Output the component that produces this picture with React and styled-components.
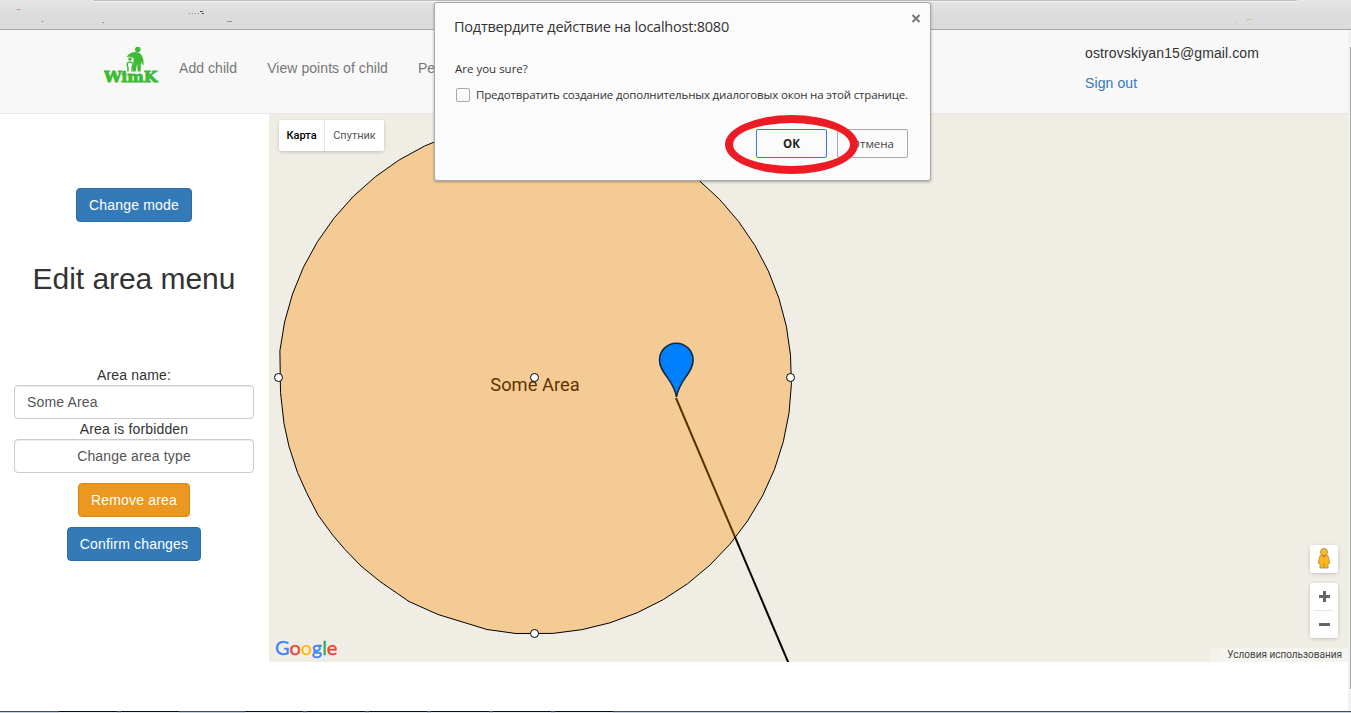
import React from "react";
import styled, { createGlobalStyle, css } from "styled-components";

const Global = createGlobalStyle`
  * { box-sizing: border-box; }
  html, body { margin: 0; padding: 0; }
  body {
    overflow: hidden;
    background: #fff;
    color: #333;
    font: 14px/20px "Liberation Sans", Arial, sans-serif;
  }
`;

const Screen = styled.div`
  position: relative;
  width: 1351px;
  height: 713px;
  display: flex;
  flex-direction: column;
  overflow: hidden;
`;

const BrowserBar = styled.div`
  flex: none;
  height: 30px;
  background: linear-gradient(#e6e6e6, #dcdcdc 50%);
  border-bottom: 1px solid #a5a5a5;
`;

const BarMarks = styled.svg`
  display: block;
`;

const Viewport = styled.div`
  flex: 1;
  min-height: 0;
  display: flex;
`;

const Page = styled.div`
  width: 1348px;
  display: flex;
  flex-direction: column;
`;

const Scrollbar = styled.div`
  flex: 1;
  background: #f1f1f1;
  padding: 17px 0 0 2px;
`;

const Thumb = styled.div`
  height: 642px;
  background: #a8a8a8;
`;

const Navbar = styled.header`
  flex: none;
  height: 84px;
  padding: 0 89px 0 104px;
  display: flex;
  background: #f8f8f8;
  border-bottom: 1px solid #e7e7e7;
`;

const Logo = styled.svg`
  margin-top: 15px;
  width: 56px;
  height: 40px;
`;

const NavLinks = styled.nav`
  flex: 1;
  display: flex;
  gap: 30px;
  padding: 28px 0 0 19px;
  letter-spacing: 0.06px;
`;

const NavLink = styled.a`
  color: #777;
  white-space: nowrap;
`;

const Account = styled.div`
  width: 174px;
  display: flex;
  flex-direction: column;
  gap: 10px;
  padding-top: 13px;
  letter-spacing: 0.11px;
`;

const SignOut = styled.a`
  color: #337ab7;
`;

const Main = styled.main`
  height: 548px;
  display: flex;
`;

const Sidebar = styled.aside`
  width: 269px;
  padding: 74px 15px 0 14px;
  display: flex;
  flex-direction: column;
  align-items: center;
  letter-spacing: 0.15px;
`;

const tones = {
  primary: css`
    background: #337ab7;
    border-color: #2e6da4;
  `,
  warning: css`
    background: #ec971f;
    border-color: #d58512;
  `,
};

const Button = styled.button`
  height: 34px;
  flex: none;
  padding: 0 12px;
  margin-top: ${(p) => p.$gap || 0}px;
  border: 1px solid;
  border-radius: 4px;
  color: #fff;
  font: inherit;
  letter-spacing: 0.17px;
  white-space: nowrap;
  ${(p) => tones[p.$tone]}
`;

const Title = styled.h2`
  margin: 40px 0 70px;
  font-size: 30px;
  line-height: 33px;
  font-weight: 400;
  letter-spacing: -0.05px;
  white-space: nowrap;
`;

const Field = styled.div`
  width: 240px;
  height: 34px;
  padding: 6px 12px;
  border: 1px solid #ccc;
  border-radius: 4px;
  color: #555;
  text-align: ${(p) => p.$align || "left"};
  box-shadow: inset 0 1px 1px rgba(0, 0, 0, 0.075);
`;

const MapPane = styled.section`
  position: relative;
  width: 1079px;
  height: 548px;
  background: #f0ede5;
  overflow: hidden;
  font-family: Roboto, Arial, sans-serif;
`;

const MapDrawing = styled.svg`
  display: block;
`;

const MapTypes = styled.div`
  position: absolute;
  left: 10px;
  top: 6px;
  display: flex;
  height: 31px;
  border-radius: 2px;
  background: #fff;
  box-shadow: 0 1px 4px -1px rgba(0, 0, 0, 0.3);
  font-size: 11px;
  line-height: 31px;
`;

const MapType = styled.div`
  width: ${(p) => p.$width}px;
  text-align: center;
  color: ${(p) => (p.$active ? "#000" : "#565656")};
  font-weight: ${(p) => (p.$active ? 500 : 400)};
  & + & { border-left: 1px solid #e6e6e6; }
`;

const Controls = styled.div`
  position: absolute;
  right: 10px;
  bottom: 24px;
  display: flex;
  flex-direction: column;
  gap: 10px;
`;

const ControlCard = styled.div`
  width: 28px;
  height: ${(p) => p.$height}px;
  background: #fff;
  border-radius: 2px;
  box-shadow: 0 1px 4px -1px rgba(0, 0, 0, 0.3);
`;

const Terms = styled.div`
  position: absolute;
  right: 0;
  bottom: 0;
  height: 14px;
  padding: 0 6px 0 5px;
  border-left: 12px solid #f3f2ec;
  background: #f5f4ef;
  color: #444;
  font-size: 10px;
  line-height: 14px;
  white-space: nowrap;
`;

const GoogleMark = styled.div`
  position: absolute;
  left: 6px;
  bottom: 3px;
  font: 20px/24px Lato, sans-serif;
  letter-spacing: -0.1px;
  -webkit-text-stroke: 0.5px;
  text-shadow: 0 0 2px #fff, 0 0 2px #fff, 0 0 2px #fff;
`;

const Letter = styled.span`
  color: ${(p) => p.$color};
  -webkit-text-stroke-color: ${(p) => p.$color};
`;

const TaskStrip = styled.div`
  height: 2px;
  flex: none;
  display: flex;
  background: #c5d3e0;
  border-top: 1px solid #3c4f66;
`;

const TaskGap = styled.div`
  width: 59px;
`;

const TaskItem = styled.div`
  width: 58px;
  height: 2px;
  margin: -1px ${(p) => p.$gap || 4}px 0 0;
  border-top: 1px solid #111;
  background: #e6edf3;
`;

const Dialog = styled.div`
  position: absolute;
  left: 434px;
  top: 2px;
  width: 497px;
  height: 179px;
  padding: 14px 22px 0 20px;
  border: 1px solid #a9a9a9;
  border-radius: 3px;
  background: #fbfbfb;
  box-shadow: 0 1px 3px rgba(0, 0, 0, 0.3);
  color: #333;
  font: 11.5px/16px "Open Sans", sans-serif;
`;

const DialogHead = styled.div`
  display: flex;
  justify-content: space-between;
  margin: 0 -13px 0 -1px;
  height: 44px;
`;

const DialogTitle = styled.div`
  font-size: 14.5px;
  line-height: 20px;
  letter-spacing: -0.23px;
  white-space: nowrap;
`;

const CloseIcon = styled.svg`
  margin-top: -6px;
`;

const CheckRow = styled.div`
  display: flex;
  align-items: center;
  gap: 6px;
  height: 16px;
  margin-top: 10px;
  padding-left: 1px;
  white-space: nowrap;
  letter-spacing: -0.165px;
`;

const Checkbox = styled.span`
  width: 14px;
  height: 14px;
  flex: none;
  border: 1px solid #aaa;
  border-radius: 2px;
  background: linear-gradient(#fff, #f5f5f5);
`;

const DialogActions = styled.div`
  display: flex;
  justify-content: flex-end;
  gap: 10px;
  margin-top: 26px;
`;

const DialogButton = styled.button`
  width: 71px;
  height: 29px;
  padding: 0;
  border: 1px solid ${(p) => (p.$primary ? "#3b78e7" : "#aaa")};
  border-radius: 2px;
  background: #fbfbfb;
  color: ${(p) => (p.$primary ? "#222" : "#444")};
  font: ${(p) => (p.$primary ? 700 : 400)} 11.5px "Open Sans", sans-serif;
`;

const Highlight = styled.div`
  position: absolute;
  left: 725px;
  top: 115px;
  width: 133px;
  height: 59px;
  border: 8px solid #ed1c24;
  border-radius: 50%;
`;

// South-west part of the area outline, as offsets from its centre.
const southWest = [
  [-254.5, 15], [-251, 46], [-246, 69], [-237.5, 95], [-228.5, 115],
  [-217, 137.5], [-202, 158], [-190, 172], [-174, 188.5], [-155, 204],
  [-126, 224], [-97, 237], [-48, 252], [-19, 256],
];
// The rest of the outline, evenly stepped from south through east to west.
const rest = Array.from({ length: 41 }, (_, i) => {
  const a = ((86 - i * 6.5) * Math.PI) / 180;
  return [256.5 * Math.cos(a), 256.5 * Math.sin(a)];
});
const circlePoints = [...southWest, ...rest]
  .map(([x, y]) => `${(266 + x).toFixed(1)},${(263.5 + y).toFixed(1)}`)
  .join(" ");

const handles = [
  [9.5, 263.5],
  [265.5, 263.5],
  [521.5, 263.5],
  [265.5, 519.5],
];

const googleLetters = [
  ["G", "#4285f4"],
  ["o", "#ea4335"],
  ["o", "#fbbc05"],
  ["g", "#4285f4"],
  ["l", "#34a853"],
  ["e", "#ea4335"],
];

export default function App() {
  return (
    <>
      <Global />
      <Screen>
        <BrowserBar>
          <BarMarks width="1351" height="29">
            <path d="M94 .5H1297" stroke="#bdbdbd" />
            <path d="M94 1.5H1297" stroke="#f4f4f4" />
            <path d="M17 9.5h3" stroke="#d08a80" />
            <path d="M42 21.5h1" stroke="#667" />
            <path d="M102 22.5h2M227 21.5h5" stroke="#7f97c0" />
            <path d="M189 13.5h11" stroke="#889" strokeDasharray="1 2" />
            <path d="M200 11.5h3M202 13.5h2" stroke="#555" />
            <path d="M1246 19.5h5" stroke="#e5bd7c" />
            <path d="M1236.500 20v5" stroke="#cfcfcf" />
          </BarMarks>
        </BrowserBar>
        <Viewport>
          <Page>
            <Navbar>
              <Logo viewBox="0 0 56 40">
                <g fill="#3dbb35">
                  <circle cx="33.800" cy="4.500" r="2.800" />
                  <path d="M22.500 12c3-5 9-6 13-4 3 2 4.500 7 4 12l-1.500-.5-1-3-.3 10h-3l-.5-8-1.500 8h-3l1-13c-2-2-4-2-7.200-1.500z" />
                  <circle cx="26" cy="14" r="1.800" />
                </g>
                <path d="M23 18.500q3-3 6 0l-1 5v3M23 18.500l1 5v3" fill="none" stroke="#3dbb35" strokeWidth="1.500" />
                <text x="0" y="36.500" textLength="53.500" lengthAdjust="spacingAndGlyphs" fill="#3dbb35" stroke="#3dbb35" strokeWidth=".9" fontFamily="DejaVu Serif" fontWeight="700" fontSize="14.500">WimK</text>
              </Logo>
              <NavLinks>
                <NavLink>Add child</NavLink>
                <NavLink>View points of child</NavLink>
                <NavLink>Pe</NavLink>
              </NavLinks>
              <Account>
                <span>ostrovskiyan15@gmail.com</span>
                <SignOut>Sign out</SignOut>
              </Account>
            </Navbar>
            <Main>
              <Sidebar>
                <Button $tone="primary">Change mode</Button>
                <Title>Edit area menu</Title>
                <span>Area name:</span>
                <Field>Some Area</Field>
                <span>Area is forbidden</span>
                <Field $align="center">Change area type</Field>
                <Button $tone="warning" $gap={10}>Remove area</Button>
                <Button $tone="primary" $gap={10}>Confirm changes</Button>
              </Sidebar>
              <MapPane>
                <MapDrawing width="1079" height="548">
                  <path d="M407 284L519.500 549" stroke="#000" strokeWidth="2" />
                  <text x="266" y="277" textAnchor="middle" fontSize="18.300" textLength="89.500" fontFamily="Roboto" fill="#000">Some Area</text>
                  <polygon points={circlePoints} fill="#ff8c00" fillOpacity=".35" stroke="#000" strokeWidth="1" />
                  <path d="M407.500 283C405 266 390.500 259 390.500 246a16.800 16.800 0 0 1 33.600 0c0 13-14 20-16.600 37z" fill="#0080ff" stroke="#132b42" strokeWidth="1.600" />
                  {handles.map(([x, y]) => (
                    <circle key={`${x}-${y}`} cx={x} cy={y} r="4" fill="#fff" stroke="#000" />
                  ))}
                </MapDrawing>
                <MapTypes>
                  <MapType $active $width={45}>Карта</MapType>
                  <MapType $width={60}>Спутник</MapType>
                </MapTypes>
                <Controls>
                  <ControlCard $height={28}>
                    <svg width="28" height="28">
                      <path d="M10 10.500q4-2 8 0l2 7.500-2 .8v4.200h-8v-4.200l-2-.8z" fill="#fbb820" stroke="#a58c5a" strokeWidth=".8" />
                      <path d="M14 18v5" stroke="#c98d20" />
                      <circle cx="14" cy="7" r="3.600" fill="#fbb820" stroke="#a58c5a" strokeWidth=".8" />
                      <path d="M12 10.500h4l-2 2.500z" fill="#e56d20" />
                    </svg>
                  </ControlCard>
                  <ControlCard $height={55}>
                    <svg width="28" height="55">
                      <path d="M9 13.500h11M14.500 8v11M9 41.500h11" stroke="#666" strokeWidth="3" />
                      <path d="M4 27.500h19" stroke="#e6e6e6" />
                    </svg>
                  </ControlCard>
                </Controls>
                <GoogleMark>
                  {googleLetters.map(([c, color], i) => (
                    <Letter key={i} $color={color}>{c}</Letter>
                  ))}
                </GoogleMark>
                <Terms>Условия использования</Terms>
              </MapPane>
            </Main>
          </Page>
          <Scrollbar>
            <Thumb />
          </Scrollbar>
        </Viewport>
        <TaskStrip>
          <TaskGap />
          <TaskItem />
          <TaskItem $gap={66} />
          {[0, 1, 2, 3, 4, 5].map((n) => (
            <TaskItem key={n} />
          ))}
        </TaskStrip>
        <Dialog>
          <DialogHead>
            <DialogTitle>Подтвердите действие на localhost:8080</DialogTitle>
            <CloseIcon width="10" height="20">
              <path d="M1.500 4l7 7m0-7l-7 7" stroke="#777" strokeWidth="2" />
            </CloseIcon>
          </DialogHead>
          <div>Are you sure?</div>
          <CheckRow>
            <Checkbox />
            Предотвратить создание дополнительных диалоговых окон на этой странице.
          </CheckRow>
          <DialogActions>
            <DialogButton $primary>ОК</DialogButton>
            <DialogButton>Отмена</DialogButton>
          </DialogActions>
        </Dialog>
        <Highlight />
      </Screen>
    </>
  );
}
